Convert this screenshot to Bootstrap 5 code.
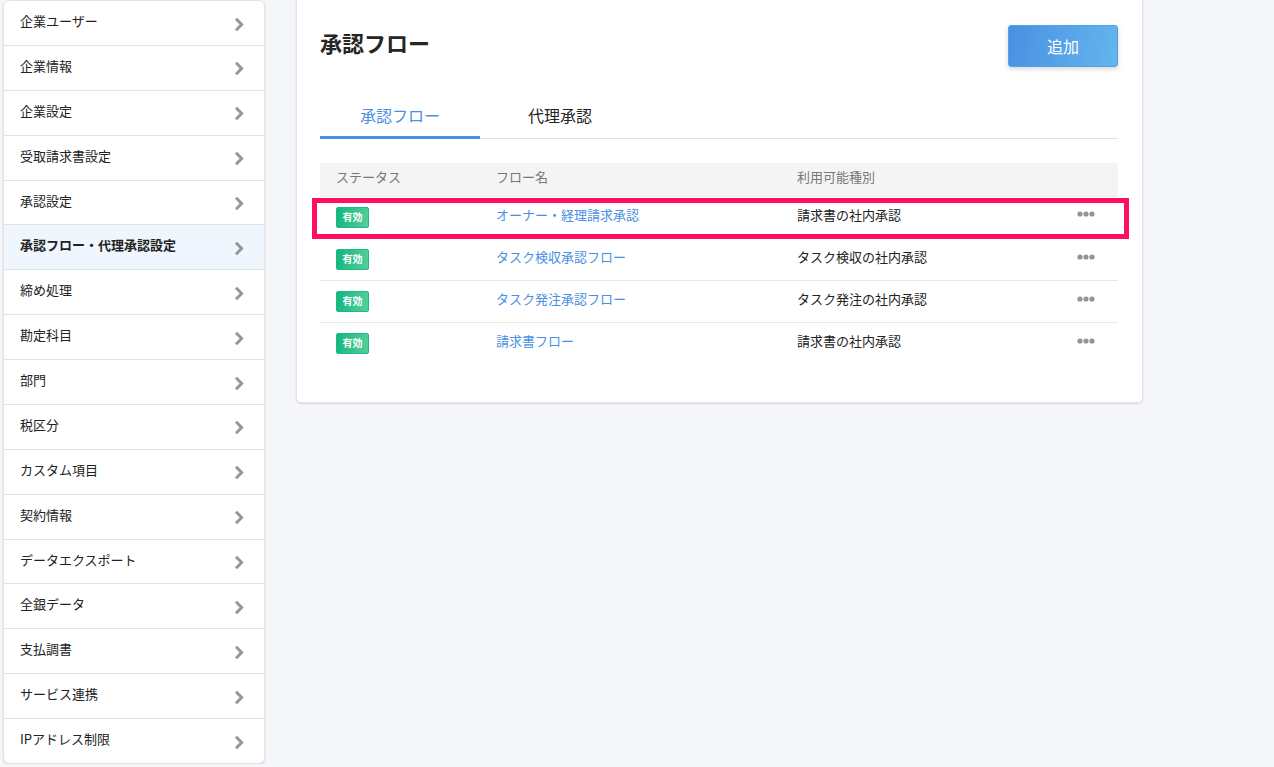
<!DOCTYPE html>
<html lang="ja">
<head>
    <meta charset="UTF-8">
    <meta name="viewport" content="width=device-width, initial-scale=1.0">
    <title>承認フロー</title>
    <link href="https://cdn.jsdelivr.net/npm/bootstrap@5.3.3/dist/css/bootstrap.min.css" rel="stylesheet">
    <style>
        body {
            background-color: #f5f6fa;
            font-family: "Noto Sans CJK JP", "Liberation Sans", sans-serif;
            font-size: 13px;
            color: #222;
            overflow: hidden;
        }
        .page-wrap {
            padding-left: 3px;
            gap: 31px;
        }
        .side-menu {
            width: 262px;
            height: 764px;
            flex: none;
            border: 1px solid #e2e2e2;
            border-top: 0;
            border-radius: 6px;
            box-shadow: 0 1px 2px rgba(0, 0, 0, .12);
        }
        .side-menu .list-group-item {
            flex: 1 1 0;
            display: flex;
            justify-content: space-between;
            padding: 0 20px 0 16px;
            border-width: 1px 0 0;
            border-color: #e2e2e2;
            color: #222;
            font-size: 13px;
            line-height: 1;
        }
        .side-menu .list-group-item + .list-group-item {
            border-top-width: 1px;
        }
        .side-menu .list-group-item span {
            padding-top: 13px;
        }
        .side-menu .list-group-item svg {
            margin-top: 15.5px;
        }
        .side-menu .list-group-item.is-current {
            background-color: #eff6fe;
            font-weight: 700;
        }
        .main-panel {
            width: 847px;
            height: 403px;
            flex: none;
            padding: 25px 24px 24px 23px;
            background: #fff;
            border: 1px solid #e4e4e4;
            border-top: 0;
            border-radius: 0 0 5px 5px;
            box-shadow: 0 1px 2px rgba(0, 0, 0, .12);
        }
        .panel-title {
            font-size: 22px;
            font-weight: 700;
            line-height: 1;
            margin: 6px 0 0;
            color: #262626;
        }
        .add-btn {
            width: 110px;
            height: 42px;
            padding: 0;
            color: #fff;
            font-size: 16px;
            background: linear-gradient(100deg, #4a90e2, #64b5ee);
            border: 1px solid #57a0e6;
            border-radius: 3px;
            box-shadow: 0 2px 5px rgba(0, 0, 0, .16);
        }
        .flow-tabs {
            margin-top: 28px;
            height: 44px;
            border-bottom: 1px solid #e0e0e0;
        }
        .flow-tabs .nav-link {
            width: 160px;
            height: 44px;
            padding: 8px 0 0;
            font-size: 16px;
            line-height: 24px;
            text-align: center;
            color: #222;
            border-bottom: 3px solid transparent;
        }
        .flow-tabs .nav-link.active {
            color: #4a90e2;
            border-bottom-color: #4a90e2;
        }
        .flow-table {
            table-layout: fixed;
            width: 798px;
            margin: 24px 0 0;
            font-size: 13px;
        }
        .flow-table th {
            height: 33px;
            padding: 0 0 5px 16px;
            font-weight: 400;
            color: #777;
            background: #f4f4f4;
            border-bottom: 2px solid #f0f0f0;
            vertical-align: middle;
        }
        .flow-table td {
            height: 42px;
            padding: 0 0 4px 16px;
            border-bottom: 1px solid #e8e8e8;
            vertical-align: middle;
            color: #222;
        }
        .flow-table tbody tr:first-child td {
            padding-bottom: 6px;
        }
        .flow-table tr:last-child td {
            border-bottom: 0;
            padding-bottom: 5px;
        }
        .flow-table td a {
            color: #4a90e2;
            text-decoration: none;
        }
        .flow-table td.status-cell,
        .flow-table tbody tr td.status-cell {
            padding-bottom: 0;
        }
        .state-tag {
            display: block;
            width: 33px;
            height: 21px;
            font-size: 10px;
            font-weight: 700;
            line-height: 18px;
            text-align: center;
            color: #fff;
            background: linear-gradient(100deg, #12b77e, #56cf9c);
            border: 1px solid #1fb985;
            border-radius: 2px;
        }
        .more-dots {
            display: block;
            width: 18px;
            margin-left: 16px;
        }
        .table-holder {
            position: relative;
        }
        .focus-box {
            position: absolute;
            left: -8px;
            top: 35px;
            width: 817px;
            height: 41px;
            border: 5px solid #ff0f5f;
            pointer-events: none;
        }
    </style>
</head>
<body>

    <div class="d-flex align-items-start page-wrap">

        <!-- Side menu -->
        <div class="list-group side-menu bg-white">
            <a class="list-group-item" href="#"><span>企業ユーザー</span><svg width="10" height="15" viewBox="0 0 10 15"><path d="M2 1.8 7.6 7.5 2 13.2" fill="none" stroke="#969696" stroke-width="3"/></svg></a>
            <a class="list-group-item" href="#"><span>企業情報</span><svg width="10" height="15" viewBox="0 0 10 15"><path d="M2 1.8 7.6 7.5 2 13.2" fill="none" stroke="#969696" stroke-width="3"/></svg></a>
            <a class="list-group-item" href="#"><span>企業設定</span><svg width="10" height="15" viewBox="0 0 10 15"><path d="M2 1.8 7.6 7.5 2 13.2" fill="none" stroke="#969696" stroke-width="3"/></svg></a>
            <a class="list-group-item" href="#"><span>受取請求書設定</span><svg width="10" height="15" viewBox="0 0 10 15"><path d="M2 1.8 7.6 7.5 2 13.2" fill="none" stroke="#969696" stroke-width="3"/></svg></a>
            <a class="list-group-item" href="#"><span>承認設定</span><svg width="10" height="15" viewBox="0 0 10 15"><path d="M2 1.8 7.6 7.5 2 13.2" fill="none" stroke="#969696" stroke-width="3"/></svg></a>
            <a class="list-group-item is-current" href="#"><span>承認フロー・代理承認設定</span><svg width="10" height="15" viewBox="0 0 10 15"><path d="M2 1.8 7.6 7.5 2 13.2" fill="none" stroke="#969696" stroke-width="3"/></svg></a>
            <a class="list-group-item" href="#"><span>締め処理</span><svg width="10" height="15" viewBox="0 0 10 15"><path d="M2 1.8 7.6 7.5 2 13.2" fill="none" stroke="#969696" stroke-width="3"/></svg></a>
            <a class="list-group-item" href="#"><span>勘定科目</span><svg width="10" height="15" viewBox="0 0 10 15"><path d="M2 1.8 7.6 7.5 2 13.2" fill="none" stroke="#969696" stroke-width="3"/></svg></a>
            <a class="list-group-item" href="#"><span>部門</span><svg width="10" height="15" viewBox="0 0 10 15"><path d="M2 1.8 7.6 7.5 2 13.2" fill="none" stroke="#969696" stroke-width="3"/></svg></a>
            <a class="list-group-item" href="#"><span>税区分</span><svg width="10" height="15" viewBox="0 0 10 15"><path d="M2 1.8 7.6 7.5 2 13.2" fill="none" stroke="#969696" stroke-width="3"/></svg></a>
            <a class="list-group-item" href="#"><span>カスタム項目</span><svg width="10" height="15" viewBox="0 0 10 15"><path d="M2 1.8 7.6 7.5 2 13.2" fill="none" stroke="#969696" stroke-width="3"/></svg></a>
            <a class="list-group-item" href="#"><span>契約情報</span><svg width="10" height="15" viewBox="0 0 10 15"><path d="M2 1.8 7.6 7.5 2 13.2" fill="none" stroke="#969696" stroke-width="3"/></svg></a>
            <a class="list-group-item" href="#"><span>データエクスポート</span><svg width="10" height="15" viewBox="0 0 10 15"><path d="M2 1.8 7.6 7.5 2 13.2" fill="none" stroke="#969696" stroke-width="3"/></svg></a>
            <a class="list-group-item" href="#"><span>全銀データ</span><svg width="10" height="15" viewBox="0 0 10 15"><path d="M2 1.8 7.6 7.5 2 13.2" fill="none" stroke="#969696" stroke-width="3"/></svg></a>
            <a class="list-group-item" href="#"><span>支払調書</span><svg width="10" height="15" viewBox="0 0 10 15"><path d="M2 1.8 7.6 7.5 2 13.2" fill="none" stroke="#969696" stroke-width="3"/></svg></a>
            <a class="list-group-item" href="#"><span>サービス連携</span><svg width="10" height="15" viewBox="0 0 10 15"><path d="M2 1.8 7.6 7.5 2 13.2" fill="none" stroke="#969696" stroke-width="3"/></svg></a>
            <a class="list-group-item" href="#"><span>IPアドレス制限</span><svg width="10" height="15" viewBox="0 0 10 15"><path d="M2 1.8 7.6 7.5 2 13.2" fill="none" stroke="#969696" stroke-width="3"/></svg></a>
        </div>

        <!-- Main panel -->
        <div class="main-panel">
            <div class="d-flex justify-content-between align-items-start">
                <h1 class="panel-title">承認フロー</h1>
                <button class="btn add-btn" type="button">追加</button>
            </div>

            <ul class="nav flow-tabs">
                <li class="nav-item"><a class="nav-link active" href="#">承認フロー</a></li>
                <li class="nav-item"><a class="nav-link" href="#">代理承認</a></li>
            </ul>

            <div class="table-holder">
                <table class="flow-table">
                    <colgroup>
                        <col style="width: 160px">
                        <col style="width: 301px">
                        <col style="width: 264px">
                        <col style="width: 73px">
                    </colgroup>
                    <thead>
                        <tr><th>ステータス</th><th>フロー名</th><th>利用可能種別</th><th></th></tr>
                    </thead>
                    <tbody>
                        <tr>
                            <td class="status-cell"><span class="state-tag">有効</span></td>
                            <td><a href="#">オーナー・経理請求承認</a></td>
                            <td>請求書の社内承認</td>
                            <td><svg class="more-dots" width="18" height="6" viewBox="0 0 18 6" fill="#949494"><circle cx="3" cy="3" r="2.6"/><circle cx="9" cy="3" r="2.6"/><circle cx="15" cy="3" r="2.6"/></svg></td>
                        </tr>
                        <tr>
                            <td class="status-cell"><span class="state-tag">有効</span></td>
                            <td><a href="#">タスク検収承認フロー</a></td>
                            <td>タスク検収の社内承認</td>
                            <td><svg class="more-dots" width="18" height="6" viewBox="0 0 18 6" fill="#949494"><circle cx="3" cy="3" r="2.6"/><circle cx="9" cy="3" r="2.6"/><circle cx="15" cy="3" r="2.6"/></svg></td>
                        </tr>
                        <tr>
                            <td class="status-cell"><span class="state-tag">有効</span></td>
                            <td><a href="#">タスク発注承認フロー</a></td>
                            <td>タスク発注の社内承認</td>
                            <td><svg class="more-dots" width="18" height="6" viewBox="0 0 18 6" fill="#949494"><circle cx="3" cy="3" r="2.6"/><circle cx="9" cy="3" r="2.6"/><circle cx="15" cy="3" r="2.6"/></svg></td>
                        </tr>
                        <tr>
                            <td class="status-cell"><span class="state-tag">有効</span></td>
                            <td><a href="#">請求書フロー</a></td>
                            <td>請求書の社内承認</td>
                            <td><svg class="more-dots" width="18" height="6" viewBox="0 0 18 6" fill="#949494"><circle cx="3" cy="3" r="2.6"/><circle cx="9" cy="3" r="2.6"/><circle cx="15" cy="3" r="2.6"/></svg></td>
                        </tr>
                    </tbody>
                </table>
                <div class="focus-box"></div>
            </div>
        </div>
    </div>

    <script src="https://cdn.jsdelivr.net/npm/bootstrap@5.3.3/dist/js/bootstrap.bundle.min.js"></script>
</body>
</html>
